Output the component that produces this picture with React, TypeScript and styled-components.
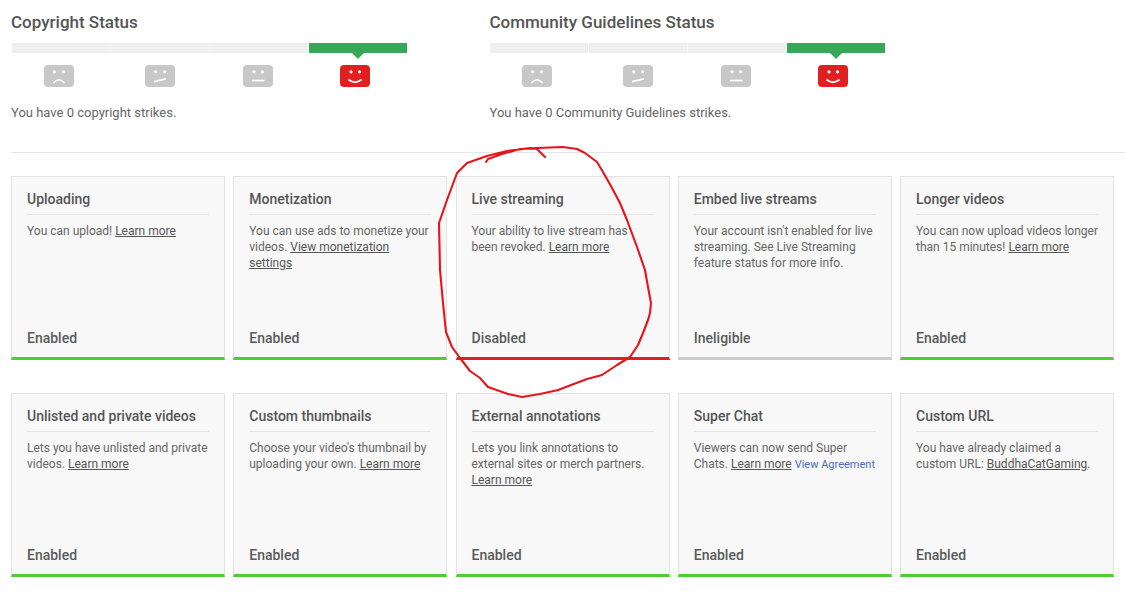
import React from "react";
import styled, { createGlobalStyle } from "styled-components";

const Global = createGlobalStyle`
  html, body { margin: 0; padding: 0; background: #fff; }
  body { font-family: Roboto, "Liberation Sans", sans-serif; color: #666; overflow: hidden; }
`;

const Page = styled.div`
  position: relative;
  width: 1125px;
  height: 596px;
  overflow: hidden;
  padding-left: 11px;
  box-sizing: border-box;
`;
const StatusRow = styled.section`
  display: flex;
  height: 152px;
  border-bottom: 1px solid #e5e5e5;
  box-sizing: content-box;
`;
const StatusBlock = styled.div`
  width: 478.5px;
  padding-top: 13px;
`;
const StatusTitle = styled.h2`
  margin: 0;
  font-size: 17px;
  line-height: 19px;
  font-weight: 500;
  color: #555;
`;
const Meter = styled.div`
  display: flex;
  gap: 1px;
  width: 395px;
  margin: 11px 0 0 0.5px;
`;
const Step = styled.div`
  position: relative;
  flex: 1;
  height: 44px;
`;
const Bar = styled.div<{ $active?: boolean }>`
  position: relative;
  height: 10px;
  background: ${(p) => (p.$active ? "#37a857" : "#efefef")};
  ${(p) =>
    p.$active &&
    `&::after {
      content: "";
      position: absolute;
      left: 50%;
      top: 10px;
      margin-left: -6px;
      border-left: 6px solid transparent;
      border-right: 6px solid transparent;
      border-top: 6px solid #37a857;
    }`}
`;
const Face = styled.svg<{ $inset: number }>`
  display: block;
  width: 30px;
  height: 22px;
  margin: 12px 0 0 ${(p) => p.$inset}px;
`;
const StatusText = styled.p`
  margin: 17px 0 0;
  font-size: 13px;
  line-height: 18px;
  color: #666;
`;
const Cards = styled.div`
  display: grid;
  grid-template-columns: repeat(5, 214px);
  column-gap: 8.25px;
  row-gap: 33px;
  padding-top: 23px;
`;
const Card = styled.article<{ $state: string }>`
  display: flex;
  flex-direction: column;
  height: 184px;
  box-sizing: border-box;
  padding: 14px 15px 0;
  background: #f8f8f8;
  border: 1px solid #e2e2e2;
  border-bottom: 3px solid ${(p) =>
    p.$state === "Enabled" ? "#4fcb35" : p.$state === "Disabled" ? "#df2020" : "#cccccc"};
`;
const CardTitle = styled.h3`
  margin: 0;
  padding-bottom: 6px;
  font-size: 14px;
  line-height: 17px;
  font-weight: 500;
  color: #555;
  border-bottom: 1px solid #e5e5e5;
`;
const CardBody = styled.p`
  flex: 1;
  margin: 8px 0 0;
  font-size: 12px;
  line-height: 16px;
  color: #666;
`;
const Learn = styled.a`
  color: #555;
  text-decoration: underline;
`;
const Agreement = styled.a`
  color: #4a6fb5;
  font-size: 11px;
`;
const State = styled.div`
  height: 27px;
  font-size: 14px;
  line-height: 17px;
  font-weight: 500;
  color: #5a5a5a;
`;
const Scribble = styled.svg`
  position: absolute;
  left: 0;
  top: 0;
  width: 1125px;
  height: 596px;
  pointer-events: none;
`;

const moods = [
  { id: "sad", inset: 32, eyes: [10.5, 19.5], mouth: "M9.5 18 Q15 11.5 20.5 18" },
  { id: "skew", inset: 34, eyes: [10.7, 19.7], mouth: "M9 16.7 L21 13.8" },
  { id: "flat", inset: 33, eyes: [11, 19.5], mouth: "M9 15.5 L21.5 15.5" },
  { id: "happy", inset: 31, eyes: [11, 19.5], mouth: "M8.5 14.5 Q15 20 21.5 14.5" },
];

function FaceIcon({ m }: { m: (typeof moods)[number] }) {
  const active = m.id === "happy";
  return (
    <Face $inset={m.inset} viewBox="0 0 30 22">
      <rect width="30" height="22" rx="4" fill={active ? "#e02020" : "#c8c8c8"} />
      <circle cx={m.eyes[0]} cy="6.8" r="1.6" fill="#fff" />
      <circle cx={m.eyes[1]} cy="6.8" r="1.6" fill="#fff" />
      <path d={m.mouth} fill="none" stroke="#fff" strokeWidth="1.7" />
    </Face>
  );
}

function Status({ title, text }: { title: string; text: string }) {
  return (
    <StatusBlock>
      <StatusTitle>{title}</StatusTitle>
      <Meter>
        {moods.map((m) => (
          <Step key={m.id}>
            <Bar $active={m.id === "happy"} />
            <FaceIcon m={m} />
          </Step>
        ))}
      </Meter>
      <StatusText>{text}</StatusText>
    </StatusBlock>
  );
}

const L = () => <Learn>Learn more</Learn>;

const items: { title: string; state: string; body: React.ReactNode }[] = [
  { title: "Uploading", state: "Enabled", body: <>You can upload! <L /></> },
  { title: "Monetization", state: "Enabled", body: <>You can use ads to monetize your videos. <Learn>View monetization settings</Learn></> },
  { title: "Live streaming", state: "Disabled", body: <>Your ability to live stream has been revoked. <L /></> },
  { title: "Embed live streams", state: "Ineligible", body: <>Your account isn't enabled for live streaming. See Live Streaming feature status for more info.</> },
  { title: "Longer videos", state: "Enabled", body: <>You can now upload videos longer than 15 minutes! <L /></> },
  { title: "Unlisted and private videos", state: "Enabled", body: <>Lets you have unlisted and private videos. <L /></> },
  { title: "Custom thumbnails", state: "Enabled", body: <>Choose your video's thumbnail by uploading your own. <L /></> },
  { title: "External annotations", state: "Enabled", body: <>Lets you link annotations to external sites or merch partners. <L /></> },
  { title: "Super Chat", state: "Enabled", body: <>Viewers can now send Super Chats. <L /> <Agreement>View Agreement</Agreement></> },
  { title: "Custom URL", state: "Enabled", body: <>You have already claimed a custom URL: <Learn>BuddhaCatGaming</Learn>.</> },
];

export default function App() {
  return (
    <Page>
      <Global />
      <StatusRow>
        <Status title="Copyright Status" text="You have 0 copyright strikes." />
        <Status title="Community Guidelines Status" text="You have 0 Community Guidelines strikes." />
      </StatusRow>
      <Cards>
        {items.map((c) => (
          <Card key={c.title} $state={c.state}>
            <CardTitle>{c.title}</CardTitle>
            <CardBody>{c.body}</CardBody>
            <State>{c.state}</State>
          </Card>
        ))}
      </Cards>
      <Scribble viewBox="0 0 1125 596">
        <path
          d="M486 162 L488 159 L502 154 L520 149 L537 148 L563 147 L577 149 L585 153 L597 162 L603 172 L612 188 L620 203 L627 220 L637 247 L645 270 L648 287 L651 303 L650 313 L648 320 L643 333 L638 345 L630 357 L617 365 L602 375 L587 379 L558 390 L540 394 L522 397 L508 394 L488 387 L480 378 L470 371 L460 358 L452 347 L446 332 L443 303 L440 270 L439 223 L447 200 L457 173 L467 163 L487 156 L507 151 L530 148 L537 149 L545 157"
          fill="none"
          stroke="#e8141c"
          strokeWidth="2.1"
          strokeLinejoin="round"
          strokeLinecap="round"
        />
      </Scribble>
    </Page>
  );
}
